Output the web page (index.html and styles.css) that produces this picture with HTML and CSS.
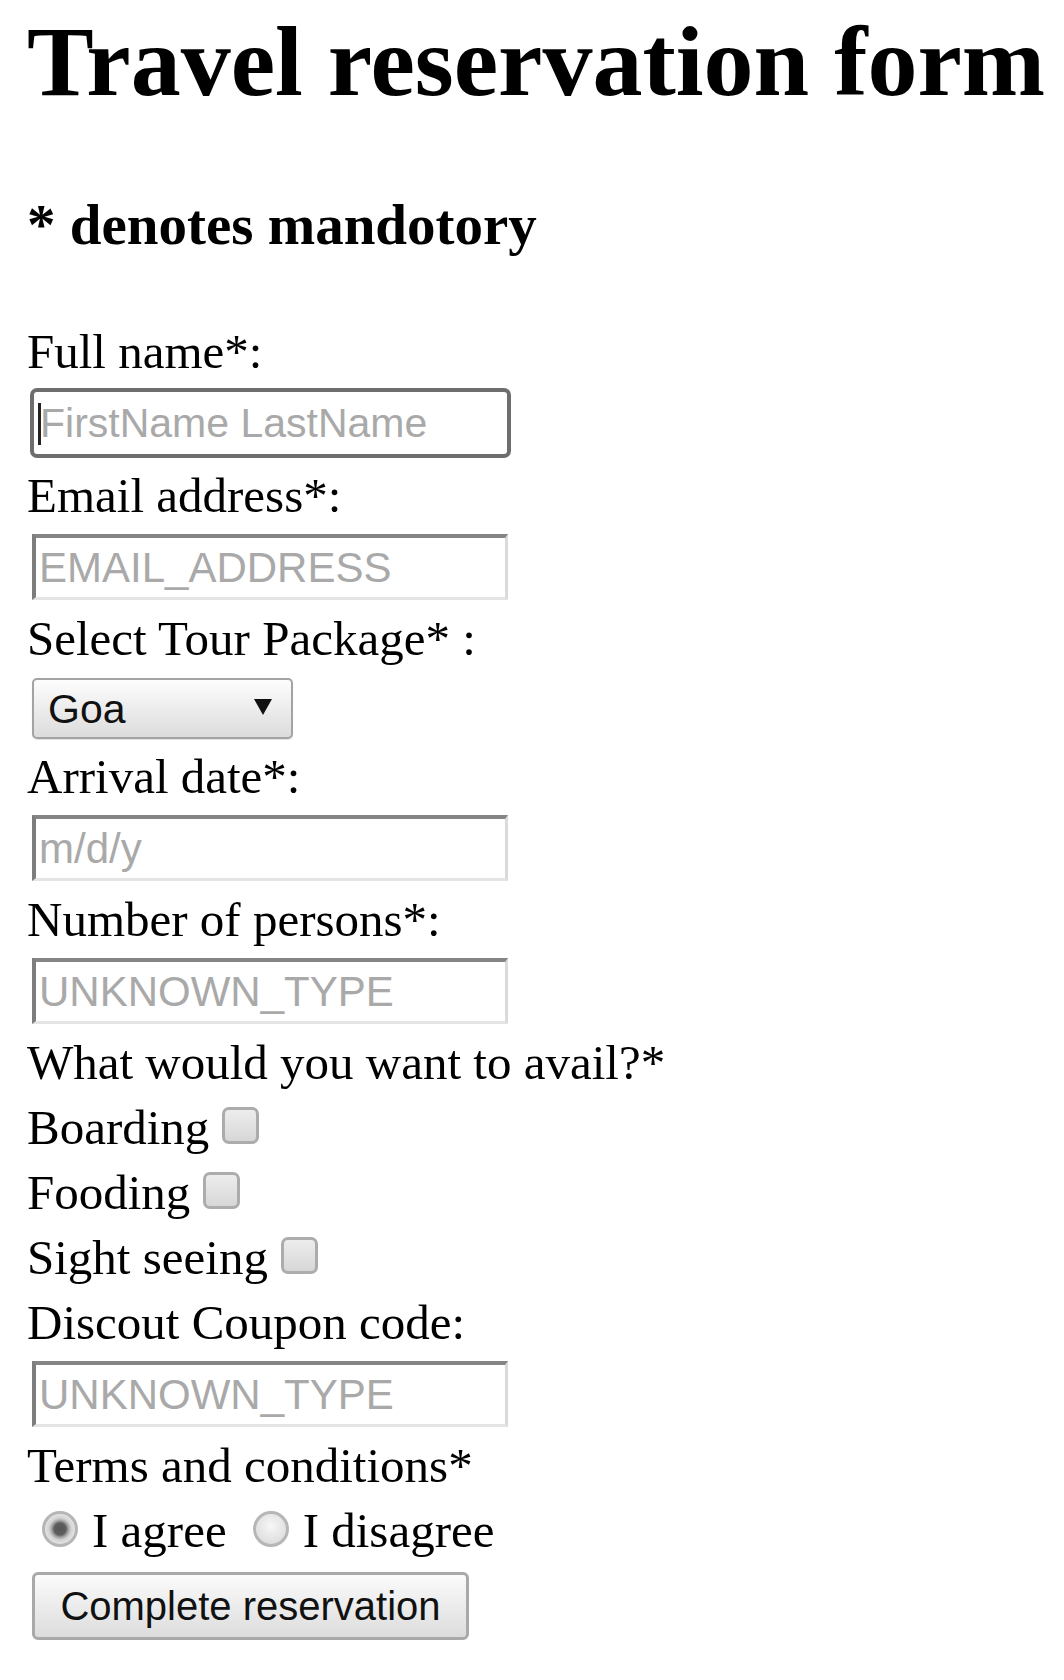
FILE: index.html
```html
<!DOCTYPE html>
<html lang="en">
<head>
<meta charset="utf-8">
<title>Travel reservation form</title>
<link rel="stylesheet" href="styles.css">
</head>
<body>
<form class="form">
  <h1 class="title">Travel reservation form</h1>
  <h3 class="note">* denotes mandotory</h3>

  <div class="label first">Full name*:</div>
  <div class="focus-wrap">
    <input class="field field-focus" type="text" placeholder="FirstName LastName">
    <span class="caret"></span>
  </div>

  <div class="label">Email address*:</div>
  <input class="field" type="email" placeholder="EMAIL_ADDRESS">

  <div class="label">Select Tour Package* :</div>
  <span class="select-wrap">
    <select class="select"><option>Goa</option><option>Kerala</option><option>Shimla</option></select>
  </span>

  <div class="label">Arrival date*:</div>
  <input class="field" type="text" placeholder="m/d/y">

  <div class="label">Number of persons*:</div>
  <input class="field" type="text" placeholder="UNKNOWN_TYPE">

  <div class="label">What would you want to avail?*</div>
  <div class="label">Boarding<input class="check" type="checkbox"></div>
  <div class="label">Fooding<input class="check" type="checkbox"></div>
  <div class="label">Sight seeing<input class="check" type="checkbox"></div>

  <div class="label">Discout Coupon code:</div>
  <input class="field" type="text" placeholder="UNKNOWN_TYPE">

  <div class="label">Terms and conditions*</div>
  <div class="label radio-row"><input class="radio" type="radio" name="terms" checked><span>I agree</span><input class="radio radio-second" type="radio" name="terms"><span>I disagree</span></div>

  <button class="submit" type="button">Complete reservation</button>
</form>
</body>
</html>
```
FILE: styles.css
```css
html, body {
  margin: 0;
  padding: 0;
  background: #ffffff;
}

body {
  font-family: "Liberation Serif", "Times New Roman", serif;
  color: #000;
}

.form {
  padding: 6px 0 0 27px;
}

.title {
  font-size: 100px;
  line-height: 112px;
  font-weight: bold;
  margin: 0;
  white-space: nowrap;
}

.note {
  font-size: 57px;
  line-height: 64px;
  font-weight: bold;
  margin: 75px 0 0;
}

.label {
  font-size: 49px;
  line-height: 65px;
  white-space: nowrap;
}

.label.first {
  margin-top: 62px;
}

.field {
  display: block;
  box-sizing: border-box;
  width: 476px;
  height: 66px;
  margin: 6px 0 6px 5px;
  padding: 0 0 0 3px;
  border-style: solid;
  border-width: 4px 3px 3px 4px;
  border-color: #858585 #dadada #e4e4e4 #7d7d7d;
  background: #fff;
  font-family: "Liberation Sans", Arial, sans-serif;
  font-size: 42px;
  color: #222;
  outline: none;
}

.field::placeholder {
  color: #a9a9a9;
}

.focus-wrap {
  position: relative;
  width: 481px;
  margin: 4px 0 5px 3px;
}

.field.field-focus {
  width: 481px;
  height: 70px;
  margin: 0;
  padding-left: 6px;
  border: 4px solid #6e6e6e;
  border-radius: 7px;
  font-size: 41px;
}

.caret {
  position: absolute;
  left: 8px;
  top: 15px;
  width: 3px;
  height: 42px;
  background: #222;
}

.select-wrap {
  display: block;
  position: relative;
  width: 261px;
  height: 61px;
  margin: 7px 0 5px 5px;
}

.select {
  -webkit-appearance: none;
  appearance: none;
  box-sizing: border-box;
  width: 100%;
  height: 100%;
  margin: 0;
  padding: 0 0 0 14px;
  border: 2px solid #a3a3a3;
  border-radius: 5px;
  background: linear-gradient(#fdfdfd, #dcdcdc);
  font-family: "Liberation Sans", Arial, sans-serif;
  font-size: 41px;
  color: #111;
  box-shadow: 0 1px 1px rgba(0, 0, 0, 0.12);
}

.select-wrap::after {
  content: "";
  position: absolute;
  right: 21px;
  top: 21px;
  border-left: 9px solid transparent;
  border-right: 9px solid transparent;
  border-top: 16px solid #111;
  pointer-events: none;
}

.check {
  -webkit-appearance: none;
  appearance: none;
  box-sizing: border-box;
  width: 37px;
  height: 37px;
  margin: 0 0 0 13px;
  vertical-align: baseline;
  border: 3px solid #acacac;
  border-radius: 7px;
  background: linear-gradient(#ededed, #d7d7d7);
}

.radio {
  -webkit-appearance: none;
  appearance: none;
  box-sizing: border-box;
  width: 36px;
  height: 36px;
  margin: 0 14px 0 15px;
  vertical-align: baseline;
  border: 3px solid #b6b6b6;
  border-radius: 50%;
  background: radial-gradient(circle at 50% 40%, #f7f7f7, #d6d6d6);
}

.radio:checked {
  background: radial-gradient(circle, #565656 0, #5e5e5e 6px, #9a9a9a 8px, #d2d2d2 11px, #e4e4e4 15px);
}

.radio.radio-second {
  margin-left: 26px;
}

.submit {
  display: block;
  box-sizing: border-box;
  width: 437px;
  height: 68px;
  margin: 9px 0 0 5px;
  padding: 0;
  border: 3px solid #a9a9a9;
  border-radius: 6px;
  background: linear-gradient(#fbfbfb, #dcdcdc);
  font-family: "Liberation Sans", Arial, sans-serif;
  font-size: 40px;
  color: #111;
}
```
